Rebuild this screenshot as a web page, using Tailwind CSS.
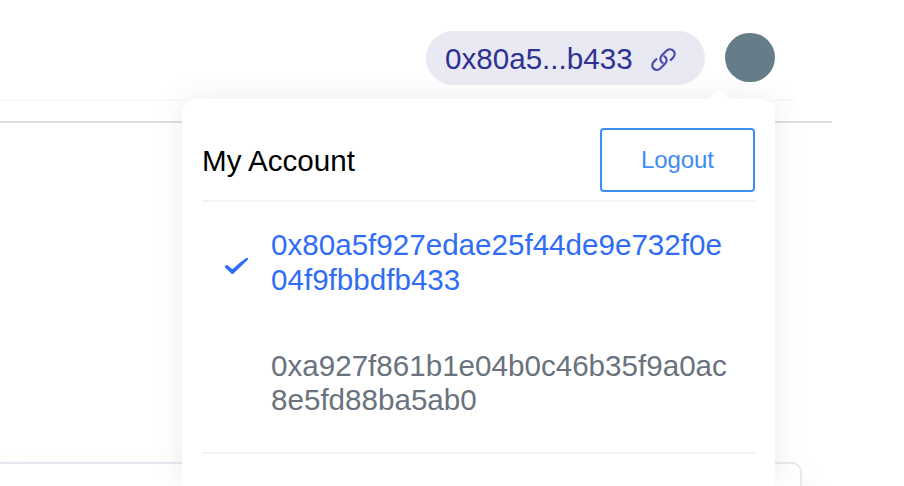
<!DOCTYPE html>
<html lang="en">
<head>
<meta charset="utf-8">
<title>My Account</title>
<script src="https://cdn.jsdelivr.net/npm/@tailwindcss/browser@4"></script>
</head>
<body class="relative h-[486px] w-[904px] overflow-hidden bg-white font-['Liberation_Sans',Arial,sans-serif] text-[29.6px] leading-[34.6px]">
  <header class="flex h-[101px] w-[794px] items-start justify-end border-b border-[#f6f6f6] pr-[19.5px] pt-[31px]">
    <div class="flex h-[54px] w-[279px] items-center rounded-full bg-[#e9e9f3] pl-[19px] text-[#2e3192]">
      <span class="whitespace-nowrap pt-[2px]">0x80a5...b433</span>
      <svg class="ml-[18px] mt-[3px] size-[25px] shrink-0" viewBox="0 0 25 25" fill="none" stroke="#4a4dac" stroke-width="2.2" stroke-linecap="round" stroke-linejoin="round">
        <path d="M11.6 15.8C8.9 14 8.6 10.9 10.8 8.6L15.2 4.1C17.2 2 20.4 1.8 22.3 3.6C24.3 5.5 24.1 8.5 22.1 10.6L19.7 13"/>
        <path d="M13.4 9.4C16.1 11.2 16.4 14.3 14.2 16.6L9.8 21.1C7.8 23.2 4.6 23.4 2.7 21.6C.7 19.7 .9 16.7 2.9 14.6L5.3 12.2"/>
      </svg>
    </div>
    <div class="ml-5 mt-[1.5px] size-[49.5px] rounded-full bg-[#647d89]"></div>
  </header>
  <main class="mt-5 w-[832px] border-t-2 border-[#dedede]">
    <div class="pt-[339px]">
      <div class="-ml-3 h-6 w-[814px] rounded-t-[10px] border-2 border-b-0 border-[#e8e8f0] shadow-[0_24px_36px_rgba(30,50,90,0.12)]"></div>
    </div>
  </main>

  <!-- Account dropdown -->
  <section class="absolute left-[182px] top-[99px] h-[387px] w-[593px] rounded-t-[14px] bg-white px-5 pt-[29px] shadow-[0_0_32px_rgba(0,0,0,0.08)]">
    <svg class="absolute -top-[11px] left-[525px] h-[12px] w-[24px]" viewBox="0 0 24 12" fill="white"><path d="M0 12L11 1Q12 0 13 1L24 12Z"/></svg>
    <div class="flex h-[74px] items-start justify-between border-b-2 border-[#f4f4f5]">
      <h1 class="pt-[16px] text-black">My Account</h1>
      <button class="h-[64px] w-[155px] rounded-[4px] border-2 border-[#3f8cf3] pt-[1px] text-[24px] tracking-[-0.1px] text-[#3f8cf3]">Logout</button>
    </div>
    <ul class="h-[252px] border-b-2 border-[#f4f4f5] pt-[26px]">
      <li class="flex h-[120.5px] text-[#2f6df6]">
        <svg class="ml-[21.5px] mt-[29px] h-[18px] w-[25px] shrink-0" viewBox="0 0 25 18" fill="#2f6df6"><path d="M1.5 8.4Q2.6 7.7 3.8 8.6L8.5 12.3Q15.5 5.5 22.3 1.1Q23.4.6 24 1.2Q24.4 2 23.6 2.9L9.5 16.5Q8.4 17.6 7.3 16.4L1.1 10.4Q.3 9.2 1.5 8.4Z"/></svg>
        <p class="ml-[22.5px] w-[470px]">0x80a5f927edae25f44de9e732f0e<br>04f9fbbdfb433</p>
      </li>
      <li class="pl-[69px] text-[#69727d]">0xa927f861b1e04b0c46b35f9a0ac<br>8e5fd88ba5ab0</li>
    </ul>
  </section>
</body>
</html>
